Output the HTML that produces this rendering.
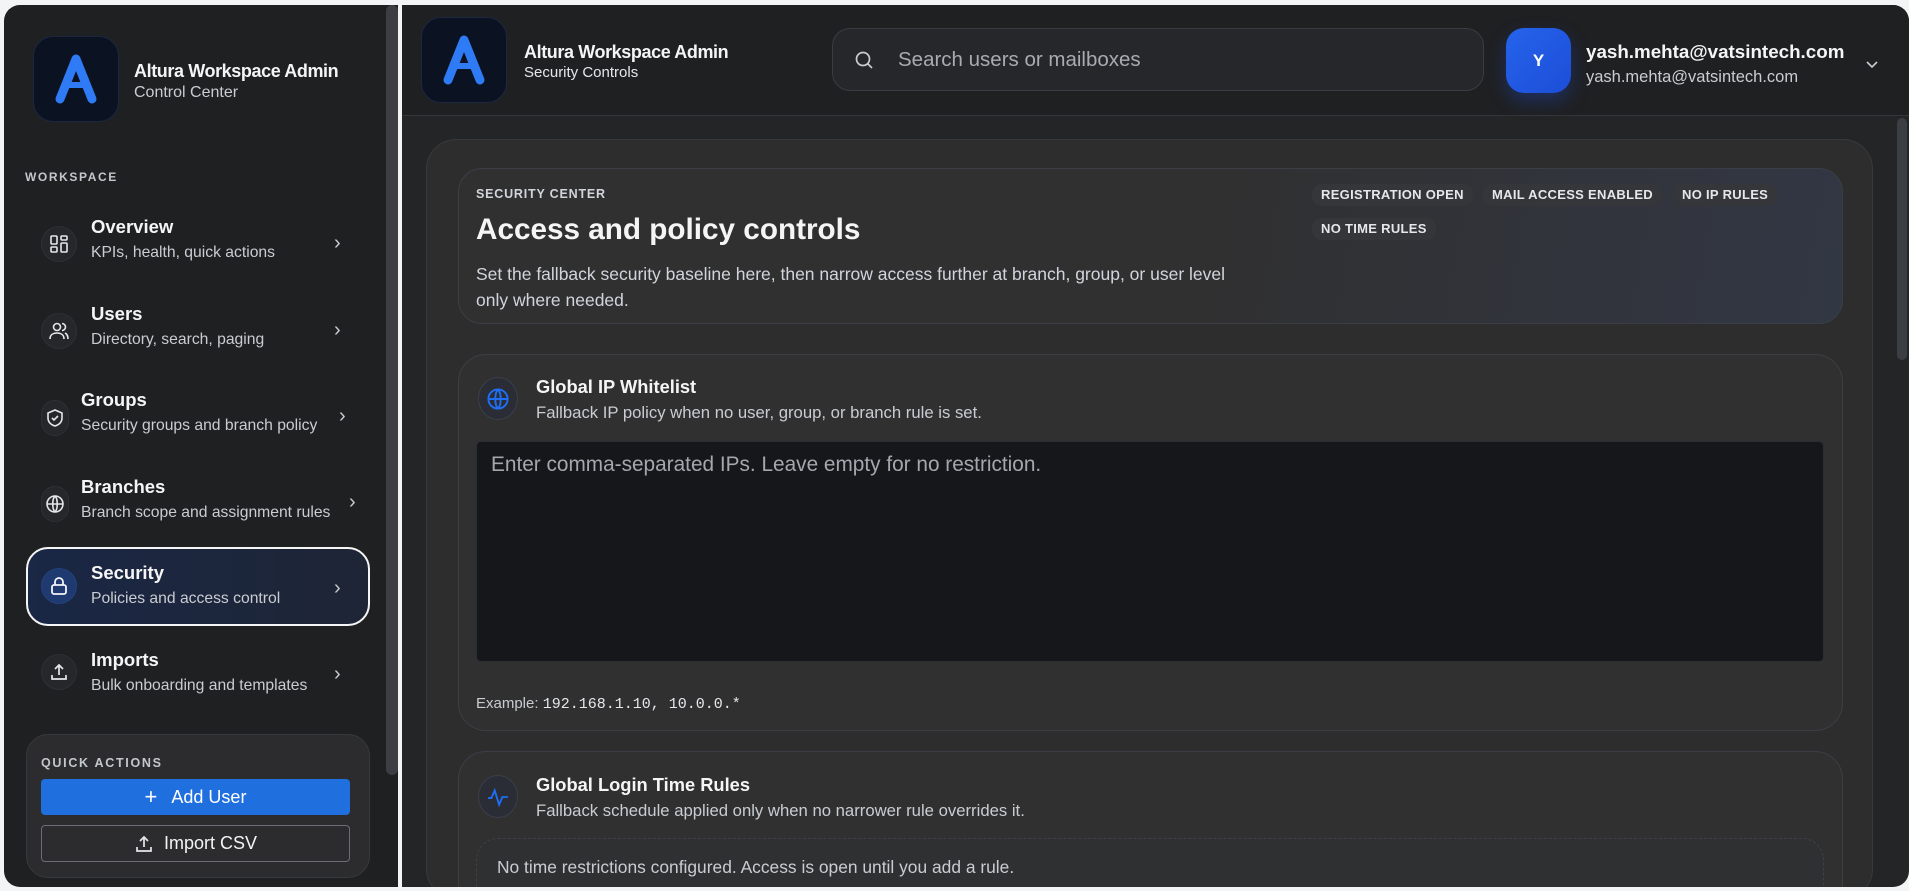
<!DOCTYPE html>
<html style="overflow:hidden;height:891px"><head><meta charset="utf-8"><style>
*{box-sizing:border-box;margin:0;padding:0}
body{width:1909px;height:891px;background:#f3f4f6;font-family:"Liberation Sans",sans-serif;position:relative;overflow:hidden;color:#f3f4f6}
.a{position:absolute}
.side{left:4px;top:5px;width:394px;height:882px;background:#1f2022;border-radius:16px 0 0 16px}
.main{left:402px;top:5px;width:1507px;height:882px;background:#242526;border-radius:0 16px 16px 0;overflow:hidden}
.logo{background:#0b1222;border-radius:20px;border:1px solid #1c2740;display:flex;align-items:center;justify-content:center}
.t{font-weight:bold;color:#f5f5f5;white-space:nowrap}
.s{color:#c9ccd1;white-space:nowrap}
.ic{border-radius:50%;background:#26272a;border:1px solid #2e3034;display:flex;align-items:center;justify-content:center}
.chev{color:#c9ccd1;font-size:20px}
.badge{background:#34363a;border-radius:10px;font-size:13px;font-weight:bold;letter-spacing:.3px;color:#e5e7eb;height:22px;line-height:22px;padding:0 9px;white-space:nowrap}
.card{background:#303031;border:1px solid #3b3f45;border-radius:28px}
svg{display:block}
</style></head><body>
<div class="a side">
  <div class="a logo" style="left:29px;top:31px;width:86px;height:86px">
    <svg width="60" height="60" viewBox="0 0 60 60"><path d="M14 50 L30 10 L46 50" stroke="#2f7bf5" stroke-width="9" fill="none" stroke-linecap="round" stroke-linejoin="round"/><path d="M22 36 H38" stroke="#2f7bf5" stroke-width="6"/></svg>
  </div>
  <div class="a t" style="left:130px;top:56px;font-size:18px;letter-spacing:-.4px">Altura Workspace Admin</div>
  <div class="a s" style="left:130px;top:79px;font-size:16px">Control Center</div>
  <div class="a t" style="left:21px;top:165px;font-size:12px;letter-spacing:1.6px;color:#c4c7cc">WORKSPACE</div>

  <div class="a ic" style="left:37px;top:221px;width:36px;height:36px"><svg width="20" height="20" viewBox="0 0 20 20" fill="none" stroke="#e5e7eb" stroke-width="1.6"><rect x="2" y="2" width="6" height="8" rx="1"/><rect x="12" y="2" width="6" height="4" rx="1"/><rect x="2" y="13" width="6" height="5" rx="1"/><rect x="12" y="9" width="6" height="9" rx="1"/></svg></div>
  <div class="a t" style="left:87px;top:211px;font-size:18.5px">Overview</div>
  <div class="a s" style="left:87px;top:239px;font-size:15.7px">KPIs, health, quick actions</div>
  <div class="a chev" style="left:330px;top:227px">›</div>

  <div class="a ic" style="left:37px;top:308px;width:36px;height:36px"><svg width="22" height="22" viewBox="0 0 22 22" fill="none" stroke="#e5e7eb" stroke-width="1.6"><circle cx="9" cy="7" r="3.5"/><path d="M2 19c0-4 3-6 7-6s7 2 7 6"/><path d="M14 3.5a3.5 3.5 0 0 1 0 7M17 13c2 1 3 3 3 6"/></svg></div>
  <div class="a t" style="left:87px;top:298px;font-size:18.5px">Users</div>
  <div class="a s" style="left:87px;top:326px;font-size:15.7px">Directory, search, paging</div>
  <div class="a chev" style="left:330px;top:314px">›</div>

  <div class="a ic" style="left:37px;top:395px;width:28px;height:36px;border-radius:14px"><svg width="20" height="20" viewBox="0 0 20 20" fill="none" stroke="#e5e7eb" stroke-width="1.6"><path d="M10 2l7 3v5c0 4-3 7-7 8-4-1-7-4-7-8V5z"/><path d="M7 10l2 2 4-4"/></svg></div>
  <div class="a t" style="left:77px;top:384px;font-size:18.5px">Groups</div>
  <div class="a s" style="left:77px;top:412px;font-size:15.7px">Security groups and branch policy</div>
  <div class="a chev" style="left:335px;top:400px">›</div>

  <div class="a ic" style="left:37px;top:481px;width:28px;height:36px;border-radius:14px"><svg width="20" height="20" viewBox="0 0 20 20" fill="none" stroke="#e5e7eb" stroke-width="1.6"><circle cx="10" cy="10" r="8"/><path d="M2 10h16M10 2c-3 3-3 13 0 16M10 2c3 3 3 13 0 16"/></svg></div>
  <div class="a t" style="left:77px;top:471px;font-size:18.5px">Branches</div>
  <div class="a s" style="left:77px;top:499px;font-size:15.7px">Branch scope and assignment rules</div>
  <div class="a chev" style="left:345px;top:486px">›</div>

  <div class="a" style="left:22px;top:542px;width:344px;height:79px;border:2px solid #f5f5f5;border-radius:22px;background:linear-gradient(90deg,#1a2745,#1e2535)"></div>
  <div class="a ic" style="left:37px;top:563px;width:36px;height:36px;background:#1e3a70;border-color:#24427a"><svg width="20" height="20" viewBox="0 0 20 20" fill="none" stroke="#f3f4f6" stroke-width="1.8"><rect x="3" y="9" width="14" height="9" rx="2"/><path d="M6 9V6a4 4 0 0 1 8 0v3"/></svg></div>
  <div class="a t" style="left:87px;top:557px;font-size:18.5px">Security</div>
  <div class="a s" style="left:87px;top:585px;font-size:15.7px">Policies and access control</div>
  <div class="a chev" style="left:330px;top:572px">›</div>

  <div class="a ic" style="left:37px;top:649px;width:36px;height:36px"><svg width="20" height="20" viewBox="0 0 20 20" fill="none" stroke="#e5e7eb" stroke-width="1.7"><path d="M10 13V3M6 7l4-4 4 4M3 13v4h14v-4"/></svg></div>
  <div class="a t" style="left:87px;top:644px;font-size:18.5px">Imports</div>
  <div class="a s" style="left:87px;top:672px;font-size:15.7px">Bulk onboarding and templates</div>
  <div class="a chev" style="left:330px;top:658px">›</div>

  <div class="a" style="left:22px;top:729px;width:344px;height:144px;background:#2c2c2e;border:1px solid #38393c;border-radius:22px"></div>
  <div class="a t" style="left:37px;top:751px;font-size:12.5px;letter-spacing:1.7px;color:#c4c7cc">QUICK ACTIONS</div>
  <div class="a" style="left:37px;top:774px;width:309px;height:36px;background:#1f6fde;border-radius:4px;display:flex;align-items:center;justify-content:center;font-size:18px;color:#fff"><span style="font-size:22px;margin-right:14px">+</span>Add User</div>
  <div class="a" style="left:37px;top:820px;width:309px;height:37px;border:1px solid #6b6e74;border-radius:4px;display:flex;align-items:center;justify-content:center;font-size:18px;color:#f3f4f6"><svg width="20" height="20" viewBox="0 0 20 20" fill="none" stroke="#e5e7eb" stroke-width="1.7" style="margin-right:10px"><path d="M10 13V3M6 7l4-4 4 4M3 13v4h14v-4"/></svg>Import CSV</div>
</div>
<div class="a" style="left:386px;top:5px;width:12px;height:770px;background:#3b3e43;border-radius:6px"></div>

<div class="a main">
  <div class="a" style="left:0;top:0;width:1507px;height:111px;background:#1f2022;border-bottom:1px solid #34363a"></div>
  <div class="a logo" style="left:19px;top:12px;width:86px;height:86px">
    <svg width="60" height="60" viewBox="0 0 60 60"><path d="M14 50 L30 10 L46 50" stroke="#2f7bf5" stroke-width="9" fill="none" stroke-linecap="round" stroke-linejoin="round"/><path d="M22 36 H38" stroke="#2f7bf5" stroke-width="6"/></svg>
  </div>
  <div class="a t" style="left:122px;top:37px;font-size:18px;letter-spacing:-.4px">Altura Workspace Admin</div>
  <div class="a s" style="left:122px;top:59px;font-size:15px;color:#e5e7eb">Security Controls</div>
  <div class="a" style="left:430px;top:23px;width:652px;height:63px;background:#26272b;border:1px solid #3a3c41;border-radius:18px"></div>
  <svg class="a" style="left:452px;top:45px" width="20" height="20" viewBox="0 0 20 20" fill="none" stroke="#c9ccd1" stroke-width="1.7"><circle cx="9" cy="9" r="6.5"/><path d="M14 14l4 4"/></svg>
  <div class="a" style="left:496px;top:43px;font-size:20.5px;color:#a7abb2">Search users or mailboxes</div>
  <div class="a" style="left:1104px;top:23px;width:65px;height:65px;border-radius:18px;background:linear-gradient(135deg,#2563eb,#1d4ed8);display:flex;align-items:center;justify-content:center;font-weight:bold;font-size:17px;color:#fff;box-shadow:0 8px 18px rgba(29,78,216,.35)">Y</div>
  <div class="a t" style="left:1184px;top:36px;font-size:18.8px">yash.mehta@vatsintech.com</div>
  <div class="a s" style="left:1184px;top:63px;font-size:16.5px">yash.mehta@vatsintech.com</div>
  <svg class="a" style="left:1463px;top:55px" width="14" height="10" viewBox="0 0 14 10" fill="none" stroke="#c9ccd1" stroke-width="1.6"><path d="M2 2l5 5 5-5"/></svg>
  <div class="a" style="left:1495px;top:113px;width:10px;height:242px;background:#3b3e43;border-radius:5px"></div>

  <div class="a" style="left:24px;top:134px;width:1447px;height:760px;background:#2d2d2e;border:1px solid #38393c;border-radius:30px"></div>
  <div class="a card" style="left:56px;top:163px;width:1385px;height:156px;border-radius:24px;background:linear-gradient(100deg,#303031 55%,#323744 100%)"></div>
  <div class="a t" style="left:74px;top:182px;font-size:12.5px;letter-spacing:.8px;color:#d1d5db">SECURITY CENTER</div>
  <div class="a t" style="left:74px;top:208px;font-size:29.7px">Access and policy controls</div>
  <div class="a s" style="left:74px;top:256px;font-size:17.5px;line-height:26px;white-space:normal;width:780px;color:#d1d5db">Set the fallback security baseline here, then narrow access further at branch, group, or user level only where needed.</div>
  <div class="a badge" style="left:910px;top:179px">REGISTRATION OPEN</div>
  <div class="a badge" style="left:1081px;top:179px">MAIL ACCESS ENABLED</div>
  <div class="a badge" style="left:1271px;top:179px">NO IP RULES</div>
  <div class="a badge" style="left:910px;top:213px">NO TIME RULES</div>

  <div class="a card" style="left:56px;top:349px;width:1385px;height:377px"></div>
  <div class="a ic" style="left:76px;top:372px;width:40px;height:43px;background:#2a2d35;border-color:#3a3f4a"><svg width="24" height="24" viewBox="0 0 20 20" fill="none" stroke="#1e6ff5" stroke-width="1.6"><circle cx="10" cy="10" r="8"/><path d="M2 10h16M10 2c-3 3-3 13 0 16M10 2c3 3 3 13 0 16"/></svg></div>
  <div class="a t" style="left:134px;top:371px;font-size:18.3px">Global IP Whitelist</div>
  <div class="a s" style="left:134px;top:398px;font-size:16.7px">Fallback IP policy when no user, group, or branch rule is set.</div>
  <div class="a" style="left:74px;top:436px;width:1348px;height:221px;background:#15171b;border:1px solid #2a2d33;border-radius:5px"></div>
  <div class="a" style="left:89px;top:448px;font-size:20.8px;color:#a3a7ae">Enter comma-separated IPs. Leave empty for no restriction.</div>
  <div class="a s" style="left:74px;top:690px;font-size:15px">Example: <span style="font-family:'Liberation Mono',monospace;color:#e5e7eb">192.168.1.10, 10.0.0.*</span></div>

  <div class="a card" style="left:56px;top:746px;width:1385px;height:200px"></div>
  <div class="a ic" style="left:76px;top:770px;width:40px;height:43px;background:#2a2d35;border-color:#3a3f4a"><svg width="22" height="22" viewBox="0 0 20 20" fill="none" stroke="#1e6ff5" stroke-width="1.7"><path d="M1 11h3l3-7 4 13 3-7h5"/></svg></div>
  <div class="a t" style="left:134px;top:769px;font-size:18.3px">Global Login Time Rules</div>
  <div class="a s" style="left:134px;top:796px;font-size:16.7px">Fallback schedule applied only when no narrower rule overrides it.</div>
  <div class="a" style="left:74px;top:833px;width:1348px;height:80px;border:1px dashed #3d4047;border-radius:22px;background:#2f3032"></div>
  <div class="a s" style="left:95px;top:852px;font-size:17.4px">No time restrictions configured. Access is open until you add a rule.</div>
</div>
</body></html>
